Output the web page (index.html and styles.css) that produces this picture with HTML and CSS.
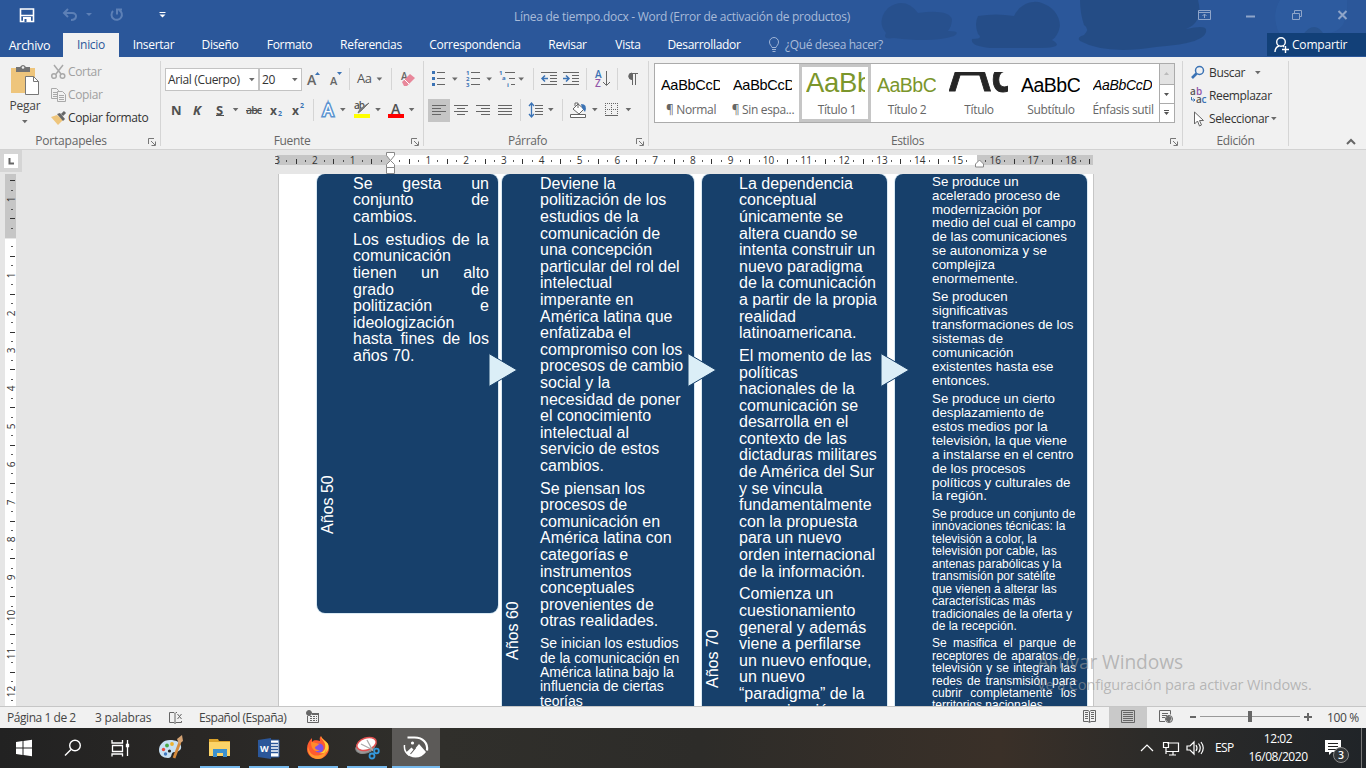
FILE: index.html
```html
<!DOCTYPE html>
<html lang="es">
<head>
<meta charset="utf-8">
<title>Línea de tiempo.docx - Word</title>
<link rel="stylesheet" href="styles.css">
</head>
<body>
<svg class="defs" width="0" height="0" aria-hidden="true">
  <defs>
    <path id="caret" d="M0 0h7L3.500 4z" fill="#6a6a6a"/>
    <g id="launch" fill="none" stroke="#777"><path d="M.5 6V.5H6M3 3l4 4M7.500 3.500v4h-4"/></g>
  </defs>
</svg>

<header class="header">
  <svg class="header-art" width="506" height="57" viewBox="860 0 506 57">
    <g fill="#244b83">
      <path d="M888 8q17-12 30 5q30-4 34 6q0 7-4 12q14 0 6 5q-20 7-60 2q-12 2-8-5q-10-12 2-25z" opacity=".55"/>
      <path d="M978 16q18-3 36 0q8-16 25-14q20 6 21 24q-2 10-8 14q14 8-12 8h-50q-20-2-18-9q12 0 6-5q-4-10 0-18z" opacity=".8"/>
      <path d="M1080 0h118q6 22-12 29q18-4 20 0q4 14-50 18q-50 8-76-6q-4-4 4-6q6-6 0-10q-4-12-4-25z" opacity=".9"/>
      <path d="M1303 35q5-8 11-8t10 8z"/>
    </g>
    <path d="M1280 0h67q2 33-21 33h-47q-8-18 1-33z" fill="#3366ad" opacity=".3"/>
  </svg>
  <div class="titlebar">
    <svg width="180" height="33" viewBox="0 0 180 33" fill="none">
      <path d="M20.500 9h13v12.500h-13zM21 15.500h12" stroke="#fff" stroke-width="1.600"/><path d="M23 17h8v5h-8z" fill="#fff"/><path d="M24.500 19h2v3h-2z" fill="#2b579a"/>
      <g stroke="#5d80b6" stroke-width="2"><path d="M64 13h8c6 0 5 7-1 7M68 9l-4 4 4 4"/><path d="M113 11a5.200 5.200 0 1 0 6-1"/><path d="M117 14.500V9.500h5"/></g>
      <path d="M86 13h6l-3 3z" fill="#5d80b6"/>
      <path d="M159.500 12.500h6" stroke="#fff"/><path d="M159.500 14.500h6l-3 3z" fill="#fff"/>
    </svg>
    <div class="title">Línea de tiempo.docx - Word (Error de activación de productos)</div>
    <svg width="176" height="33" viewBox="1190 0 176 33" fill="none" stroke="#8fa5c9">
      <path d="M1198.500 10.500h12v9h-12zM1198 12.500h13M1204.500 18v-4M1202.500 16l2-2 2 2"/>
      <path d="M1246 16.500h9" stroke-width="2"/>
      <path d="M1292.500 13.500h7v6h-7zM1294.500 13v-2.500h7v6h-2"/>
      <path d="M1338.500 11l8 8m0-8l-8 8" stroke-width="2"/>
    </svg>
  </div>
  <nav class="tabs">
    <span class="tab file">Archivo</span><span class="tab active">Inicio</span><span class="tab t1">Insertar</span><span class="tab t2">Diseño</span><span class="tab t3">Formato</span><span class="tab t4">Referencias</span><span class="tab t5">Correspondencia</span><span class="tab t6">Revisar</span><span class="tab t7">Vista</span><span class="tab t8">Desarrollador</span>
    <svg class="bulb" width="12" height="16" viewBox="0 0 12 16" fill="none" stroke="#9fb4d6"><path d="M4 10.500C3.500 8.500 1.500 8 1.500 5a4 4 0 0 1 9 0c0 3-2 3.500-2.500 5.500zM4 12.500h4M4.500 14.500h3"/></svg>
    <span class="tell">¿Qué desea hacer?</span>
    <span class="share"><svg width="17" height="18" viewBox="0 0 17 18" fill="none" stroke="#fff" stroke-width="1.400"><circle cx="8" cy="6" r="4.300"/><path d="M2 16c0-3 1.500-5 4-6M10 10l1 1M9 13.500h7M12.500 10v7"/></svg><b>Compartir</b></span>
  </nav>
</header>

<section class="ribbon">
  <div class="group g-clip">
    <div class="group-body clip">
      <div class="paste">
        <svg width="30" height="34" viewBox="12 64 30 34"><path d="M13 68h24v25H13z" fill="#eec57c"/><path d="M18 67h4q3-4 6 0h4v5H18z" fill="#737373"/><circle cx="25" cy="67.500" r="1.300" fill="#f1f1f1"/><path d="M27.500 76.500h8l5 5v13h-13z" fill="#fff" stroke="#777"/><path d="M35.500 76.500v5h5" fill="none" stroke="#777"/></svg>
        <span>Pegar</span>
        <svg width="7" height="4"><use href="#caret" transform="scale(.8)"/></svg>
      </div>
      <div class="clip-list">
        <div class="cmd off"><svg width="17" height="16" viewBox="0 0 17 16" fill="none" stroke="#a9a9a9" stroke-width="1.500"><path d="M4 1l7 9M13 1L6 10"/><circle cx="4" cy="12" r="2.300"/><circle cx="12.500" cy="12" r="2.300"/></svg><span>Cortar</span></div>
        <div class="cmd off"><svg width="17" height="16" viewBox="0 0 17 16" fill="#f1f1f1" stroke="#a9a9a9"><path d="M1.500 1.500h5l2 2v8h-7zM3 5.500h4M3 7.500h4M3 9.500h4"/><path d="M7.500 4.500h5l3 3v7h-8zM9 8.500h5M9 10.500h5M9 12.500h5"/></svg><span>Copiar</span></div>
        <div class="cmd wide"><svg width="17" height="16" viewBox="0 0 17 16"><path d="M1 7l6-2 6 5-5 5z" fill="#eec57c"/><path d="M7 4l3-1 5 6-2 2z" fill="#666"/><path d="M12 5l3-3" stroke="#666" stroke-width="3"/></svg><span>Copiar formato</span></div>
      </div>
    </div>
    <div class="caption c1"><span>Portapapeles</span><svg width="9" height="9"><use href="#launch"/></svg></div>
  </div>

  <div class="group g-font">
    <div class="group-body font">
      <div class="row r1">
        <span class="combo face">Arial (Cuerpo)<svg width="7" height="4"><use href="#caret" transform="scale(.8)"/></svg></span><span class="combo size">20<svg width="7" height="4"><use href="#caret" transform="scale(.8)"/></svg></span>
        <svg class="ui" width="119" height="24" viewBox="303 68 119 24">
          <text x="308" y="85" font-size="14" font-weight="600" fill="#666">A</text><path d="M316 75h5l-2.500-3z" fill="#3b73b5"/>
          <text x="331" y="85" font-size="11" font-weight="600" fill="#666">A</text><path d="M338 72h5l-2.500 3z" fill="#3b73b5"/>
          <path d="M350.500 68v22M392.500 68v22" stroke="#d5d5d5"/>
          <text x="358" y="83" font-size="13" fill="#555" textLength="15">Aa</text><use href="#caret" x="472" y="97" transform="scale(.8)"/>
          <text x="402" y="80" font-size="10" font-weight="600" fill="#666">A</text><path d="M403 82l8-8 5 4-8 8h-3z" fill="#e8879a"/><path d="M405 79l5 5" stroke="#fff"/>
        </svg>
      </div>
      <div class="row r2">
        <svg class="ui" width="258" height="26" viewBox="164 97 258 26" fill="#505050">
          <g font-size="13" font-weight="700"><text x="171" y="115" textLength="10">N</text><text x="193" y="115" font-style="italic">K</text><text x="216" y="115">S</text><text x="270" y="115" font-size="12">x</text><text x="292" y="115" font-size="12">x</text></g>
          <path d="M216 115.500h8" stroke="#505050"/>
          <use href="#caret" x="291" y="135" transform="scale(.8)"/>
          <text x="246" y="114" font-size="10.500" font-weight="600" textLength="16">abc</text><path d="M246 110.500h16" stroke="#505050"/>
          <g fill="#3b73b5" font-size="7" font-weight="700"><text x="278" y="116">2</text><text x="300" y="108">2</text></g>
          <path d="M313.500 99v22" stroke="#d5d5d5"/>
          <text x="323" y="116" font-size="16" fill="#fff" stroke="#5b93d0" stroke-width="3.200" paint-order="stroke">A</text>
          <use href="#caret" x="425" y="135" transform="scale(.8)"/>
          <text x="354" y="109" font-size="10" font-weight="600" textLength="11">ab</text><path d="M369 103l-8 8-3 2 2-4z" fill="#777" stroke="#777"/><path d="M354 114h16v4h-16z" fill="#ff0"/>
          <use href="#caret" x="469" y="135" transform="scale(.8)"/>
          <text x="391" y="114" font-size="14" font-weight="600">A</text><path d="M388 114h16v4h-16z" fill="red"/>
          <use href="#caret" x="511" y="135" transform="scale(.8)"/>
        </svg>
      </div>
    </div>
    <div class="caption c2"><span>Fuente</span><svg width="9" height="9"><use href="#launch"/></svg></div>
  </div>

  <div class="group g-para">
    <div class="group-body">
      <svg class="ui" width="224" height="65" viewBox="424 61 224 65" fill="none" stroke="#666">
        <path d="M428 99h22v23h-22z" fill="#c5c5c5" stroke="none"/>
        <path d="M437 72.500h8M437 78.500h8M437 84.500h8M471 72.500h9M471 78.500h9M471 84.500h9M505 72.500h10M509 78.500h6M511 84.500h4"/>
        <g fill="#3b73b5" stroke="none"><path d="M432 71h3v3h-3zM432 77h3v3h-3zM432 83h3v3h-3z"/>
        <g font-size="6" font-weight="700"><text x="466" y="75">1</text><text x="466" y="81">2</text><text x="466" y="87">3</text><text x="499" y="75">1</text><text x="502" y="80">a</text><text x="507" y="87">i</text></g></g>
        <g stroke="none"><use href="#caret" x="565" y="97" transform="scale(.8)"/><use href="#caret" x="608" y="97" transform="scale(.8)"/><use href="#caret" x="648" y="97" transform="scale(.8)"/><use href="#caret" x="685" y="135" transform="scale(.8)"/><use href="#caret" x="740" y="135" transform="scale(.8)"/><use href="#caret" x="782" y="135" transform="scale(.8)"/></g>
        <path d="M533.500 68v22M586.500 68v22M617.500 68v22M520.500 99v22M562.500 99v22" stroke="#d5d5d5"/>
        <path d="M541 72.500h16M550 75.500h7M550 78.500h7M550 81.500h7M541 84.500h16M563 72.500h16M572 75.500h7M572 78.500h7M572 81.500h7M563 84.500h16"/>
        <path d="M548 78.500h-6M545 75.500l-3 3 3 3M563 78.500h6M566 75.500l3 3-3 3" stroke="#3b73b5" stroke-width="1.500"/>
        <g stroke="none" font-size="10" font-weight="600"><text x="595" y="78" fill="#3b73b5">A</text><text x="595" y="87" fill="#9155a8">Z</text></g>
        <path d="M606.500 71v14M603 82l3.500 3.500L610 82"/>
        <path d="M632.500 73v12M635.500 73v12M631 73.500h7"/><path d="M632 73a3 3 0 0 0 0 6.500z" fill="#666"/>
        <path d="M432 105.500h14M432 108.500h9M432 111.500h14M432 114.500h9M454 105.500h14M457 108.500h8M454 111.500h14M457 114.500h8M476 105.500h14M481 108.500h9M476 111.500h14M481 114.500h9M498 105.500h14M498 108.500h14M498 111.500h14M498 114.500h14M535 105.500h8M535 108.500h8M535 111.500h8M535 114.500h8"/>
        <path d="M531.500 103v14M529 106l2.500-3 2.500 3M529 114l2.500 3 2.500-3" stroke="#3b73b5" stroke-width="1.300"/>
        <path d="M573 109l5-5 6 5-5 5zM575 106v-3h3v5" fill="#fff"/><path d="M581 104q7 0 4 8l-3-4z" fill="#3b73b5" stroke="none"/><path d="M570.500 114.500h15v3h-15z" fill="#fff"/>
        <path d="M605.500 103v13M611.500 103v13M617.500 103v13M605 103.500h13M605 109.500h13" stroke-dasharray="1 1"/><path d="M605 115.500h13"/>
      </svg>
    </div>
    <div class="caption c3"><span>Párrafo</span><svg width="9" height="9"><use href="#launch"/></svg></div>
  </div>

  <div class="group g-styles">
    <div class="group-body">
      <div class="gallery">
        <div class="style"><div class="sample s14">AaBbCcD</div><span>¶ Normal</span></div>
        <div class="style"><div class="sample s14">AaBbCcD</div><span>¶ Sin espa...</span></div>
        <div class="style selected"><div class="sample s27">AaBb</div><span>Título 1</span></div>
        <div class="style"><div class="sample s18 green">AaBbC</div><span>Título 2</span></div>
        <div class="style"><div class="sample big"><div class="s84">Aa</div></div><span>Título</span></div>
        <div class="style"><div class="sample s18">AaBbC</div><span>Subtítulo</span></div>
        <div class="style"><div class="sample s14 ital">AaBbCcD</div><span>Énfasis sutil</span></div>
        <svg width="15" height="58" viewBox="0 0 15 58" fill="none" stroke="#ababab"><path d="M.5 0v58M1 20.500h14M1 39.500h14"/><path d="M1 0h14v20H1z" fill="#e3e3e3" stroke="none"/><path d="M5 11h5l-2.500-3z" fill="#bbb" stroke="none"/><path d="M5 29h5l-2.500 3zM5 48h5l-2.500 3z" fill="#555" stroke="none"/><path d="M5 46.500h5" stroke="#555"/></svg>
      </div>
    </div>
    <div class="caption c4"><span>Estilos</span><svg width="9" height="9"><use href="#launch"/></svg></div>
  </div>

  <div class="group g-edit">
    <div class="group-body edit">
      <div class="cmd"><svg width="17" height="16" viewBox="0 0 17 16" fill="none" stroke="#3b73b5"><circle cx="9.500" cy="5.500" r="4" stroke-width="1.500"/><path d="M6.500 8.500L2 13" stroke-width="2.600"/></svg><span class="e1">Buscar</span><svg width="7" height="4"><use href="#caret" transform="scale(.8)"/></svg></div>
      <div class="cmd"><svg class="ui" width="17" height="18" viewBox="0 0 17 18"><g font-size="10" font-weight="600"><text x="0" y="8" fill="#555">a</text><text x="6" y="8" fill="#9155a8">b</text><text x="6" y="16" fill="#555">a</text><text x="11.500" y="16" fill="#3b73b5">c</text></g><path d="M1.500 10v3H5M3.500 11.500L5 13l-1.500 1.500" fill="none" stroke="#3b73b5"/></svg><span class="e2">Reemplazar</span></div>
      <div class="cmd"><svg width="17" height="16" viewBox="0 0 17 16"><path d="M4.500 1v12l3-3 2 5 2-1-2-4.500h4z" fill="#fff" stroke="#666"/></svg><span class="e3">Seleccionar</span><svg width="7" height="4"><use href="#caret" transform="scale(.8)"/></svg></div>
    </div>
    <div class="caption c5"><span>Edición</span></div>
  </div>
  <svg class="collapse" width="10" height="7" viewBox="0 0 10 7"><path d="M1 6l4-4 4 4" fill="none" stroke="#666" stroke-width="2"/></svg>
</section>

<div class="ruler-row">
  <div class="tabstop"><svg width="14" height="14"><path d="M5.500 4v5.500H10" fill="none" stroke="#666" stroke-width="2"/></svg></div>
  <svg class="ui ruler" width="822" height="24" viewBox="275 150 822 24">
    <path d="M277 155h816v10H277z" fill="#c6c6c6"/><path d="M390 155h587v10H390z" fill="#fff"/>
    <g id="hnums" font-size="10" fill="#333" text-anchor="middle"></g>
    <path d="M386.500 152.500h8v3l-4 5-4-5zM386.500 167.500v-3l4-4 4 4v3zM386.500 167.500h8v6h-8zM975.500 167v-3l4-4 4 4v3z" fill="#fff" stroke="#888"/>
  </svg>
</div>

<main class="workspace">
  <svg class="ui vruler" width="17" height="532" viewBox="0 174 17 532">
    <path d="M5 174h11v64H5z" fill="#c6c6c6"/><path d="M5 239h11v467H5z" fill="#fff"/>
    <g id="vnums" font-size="10" fill="#333" text-anchor="middle"></g>
  </svg>
  <div class="page">
    <section class="decade d50">
      <div class="label">Años 50</div>
      <div class="copy">
        <p><span class="j">Se gesta un</span><span class="j">conjunto de</span>cambios.</p>
        <p><span class="j">Los estudios de la</span>comunicación<span class="j">tienen un alto</span><span class="j">grado de</span><span class="j">politización e</span>ideologización<span class="j">hasta fines de los</span>años 70.</p>
      </div>
    </section>
    <section class="decade d60">
      <div class="label">Años 60</div>
      <div class="copy">
        <p>Deviene la<br>politización de los<br>estudios de la<br>comunicación de<br>una concepción<br>particular del rol del<br>intelectual<br>imperante en<br>América latina que<br>enfatizaba el<br>compromiso con los<br>procesos de cambio<br>social y la<br>necesidad de poner<br>el conocimiento<br>intelectual al<br>servicio de estos<br>cambios.</p>
        <p>Se piensan los<br>procesos de<br>comunicación en<br>América latina con<br>categorías e<br>instrumentos<br>conceptuales<br>provenientes de<br>otras realidades.</p>
        <p class="p14">Se inician los estudios<br>de la comunicación en<br>América latina bajo la<br>influencia de ciertas<br>teorías</p>
      </div>
    </section>
    <section class="decade d70">
      <div class="label">Años 70</div>
      <div class="copy">
        <p>La dependencia<br>conceptual<br>únicamente se<br>altera cuando se<br>intenta construir un<br>nuevo paradigma<br>de la comunicación<br>a partir de la propia<br>realidad<br>latinoamericana.</p>
        <p>El momento de las<br>políticas<br>nacionales de la<br>comunicación se<br>desarrolla en el<br>contexto de las<br>dictaduras militares<br>de América del Sur<br>y se vincula<br>fundamentalmente<br>con la propuesta<br>para un nuevo<br>orden internacional<br>de la información.</p>
        <p>Comienza un<br>cuestionamiento<br>general y además<br>viene a perfilarse<br>un nuevo enfoque,<br>un nuevo<br>“paradigma” de la<br>comunicación</p>
      </div>
    </section>
    <section class="decade d80">
      <div class="copy">
        <p>Se produce un<br>acelerado proceso de<br>modernización por<br>medio del cual el campo<br>de las comunicaciones<br>se autonomiza y se<br>complejiza<br>enormemente.</p>
        <p>Se producen<br>significativas<br>transformaciones de los<br>sistemas de<br>comunicación<br>existentes hasta ese<br>entonces.</p>
        <p>Se produce un cierto<br>desplazamiento de<br>estos medios por la<br>televisión, la que viene<br>a instalarse en el centro<br>de los procesos<br>políticos y culturales de<br>la región.</p>
        <p class="p12">Se produce un conjunto de<br>innovaciones técnicas: la<br>televisión a color, la<br>televisión por cable, las<br>antenas parabólicas y la<br>transmisión por satélite<br>que vienen a alterar las<br>características más<br>tradicionales de la oferta y<br>de la recepción.</p>
        <p class="p12"><span class="j">Se masifica el parque de</span><span class="j">receptores de aparatos de</span><span class="j">televisión y se integran las</span><span class="j">redes de transmisión para</span><span class="j">cubrir completamente los</span>territorios nacionales.</p>
      </div>
    </section>
    <svg class="arrow a1" width="30" height="36" viewBox="0 0 30 36"><path d="M1 1.500L29 18 1 34.500z" fill="#dbeef7" stroke="#17406b"/></svg>
    <svg class="arrow a2" width="30" height="36" viewBox="0 0 30 36"><path d="M1 1.500L29 18 1 34.500z" fill="#dbeef7" stroke="#17406b"/></svg>
    <svg class="arrow a3" width="30" height="36" viewBox="0 0 30 36"><path d="M1 1.500L29 18 1 34.500z" fill="#dbeef7" stroke="#17406b"/></svg>
  </div>
  <div class="watermark"><div class="w1">Activar Windows</div><div class="w2">Ve a Configuración para activar Windows.</div></div>
</main>

<footer class="status">
  <span class="st1">Página 1 de 2</span><span class="st2">3 palabras</span>
  <svg width="16" height="14" viewBox="0 0 16 14" fill="none" stroke="#666"><path d="M7 12.500L6 11.500H1.500v-10H6l1 1 1-1h1M7 2.500v10l1-1h5.500V10M9.500 3l4 5M13.500 3l-4 5"/></svg>
  <span class="st3">Español (España)</span>
  <svg class="macro" width="14" height="14" viewBox="0 0 14 14" fill="none" stroke="#666"><path d="M4 6.500h7M4 8.500h7M4 10.500h7" stroke-dasharray="2 1"/><path d="M6 3.500h6.500v9h-11V6"/><path d="M6 3h7v2H6z" fill="#666" stroke="none"/><circle cx="3" cy="3" r="2.500" fill="#666"/></svg>
  <svg class="ui views" width="246" height="21" viewBox="1075 707 246 21" fill="none" stroke="#666">
    <path d="M1109 707h38v21h-38z" fill="#c9c9c9" stroke="none"/>
    <path d="M1089.500 722.500L1088 721.500h-4.500v-11h4.500l1.500 1 1.500-1h4.500v11h-4.500zM1089.500 712v10M1085 712.500h3M1085 714.500h3M1085 716.500h3M1085 718.500h3M1091 712.500h3M1091 714.500h3M1091 716.500h3M1091 718.500h3"/>
    <path d="M1121.500 710.500h13v12h-13zM1123 712.500h10M1123 714.500h10M1123 716.500h10M1123 718.500h10M1123 720.500h10"/>
    <path d="M1165 721.500h-5.500v-11h11v4M1162 713.500h6M1162 715.500h5M1162 717.500h3"/><circle cx="1169" cy="719" r="3.500" fill="#ccc"/><path d="M1168 716l3 2-2 4-3-3z" fill="#666"/>
    <path d="M1190 717h6M1304 717h8M1308 713v8" stroke-width="2"/><path d="M1200 716.500h100" stroke="#999"/><path d="M1248 711h4v11h-4z" fill="#666" stroke="none"/>
  </svg>
  <span class="st4">100 %</span>
</footer>

<footer class="taskbar">
  <div class="task"><svg width="24" height="24" viewBox="0 0 24 24" fill="#fff"><path d="M4 6l6.500-1v6.500H4zM11.500 4.900L20 3.800v7.700h-8.500zM4 12.500h6.500V19L4 18zM11.500 12.500H20v7.700l-8.500-1.100z"/></svg></div>
  <div class="task"><svg width="24" height="24" viewBox="0 0 24 24" fill="none" stroke="#fff" stroke-width="1.400"><circle cx="14" cy="9.500" r="5.300"/><path d="M10 13.500L4 19.500"/></svg></div>
  <div class="task tv"><svg width="24" height="24" viewBox="0 0 24 24" fill="none" stroke="#fff" stroke-width="1.300"><path d="M4 4v3h10.500V4M4.500 9.500h10v6h-10zM4 20.500v-2.500h10.500v2.500M19.500 4v16"/><path d="M18.500 8.500h2v2h-2z" fill="#fff"/></svg></div>
  <div class="task"><svg width="26" height="26" viewBox="0 0 26 26"><path d="M12 5C5 5 1 10 1 15c0 5 4 8 9 8 5 0 2-5 6-6 4 0 8-2 7-6-1-4-5-6-11-6z" fill="#c7e0f3"/><circle cx="5.500" cy="14.500" r="1.700" fill="#e84b3c"/><circle cx="9" cy="10.500" r="1.900" fill="#47a846"/><circle cx="14" cy="9" r="1.900" fill="#eeb12c"/><circle cx="7.500" cy="19" r="1.700" fill="#4078c0"/><circle cx="11.500" cy="16" r="1.600" fill="#222"/><path d="M22 7l-6 16" stroke="#d58a3c" stroke-width="2.800"/><path d="M19 4l5-4 1 6-4 3z" fill="#d4a273"/></svg></div>
  <div class="task open"><svg width="24" height="24" viewBox="0 0 24 24"><path d="M1 3h9l1 2h11v4H1z" fill="#dca32b"/><path d="M1 6h21v14H1z" fill="#fcd468"/><path d="M5 21v-8h14v8h-4v-4H9v4z" fill="#3c91ce"/></svg></div>
  <div class="task open"><svg class="ui" width="24" height="24" viewBox="0 0 24 24"><path d="M12 4h10v17H12z" fill="#fff" stroke="#2b579a"/><path d="M14 7.500h7M14 10.500h7M14 13.500h7M14 16.500h7" stroke="#2b579a" stroke-width="1.300"/><path d="M1 4l13-2v21L1 21z" fill="#2b579a"/><text x="3" y="16" font-size="9" font-weight="700" fill="#fff">W</text></svg></div>
  <div class="task open"><svg width="26" height="26" viewBox="0 0 26 26"><path d="M2 14c0-5 2-8 5-11v4c3-3 6-1 8-1 0-2-1-3 1-5 0 3 8 5 8 12 0 6-5 11-11 11S2 20 2 14z" fill="#ff5b2e"/><path d="M16 1c0 4 3 4 4 8 1 5-1 8-6 9 10 2 10-5 9-9-2-3-6-4-7-8z" fill="#ffd03b"/><path d="M3 11c1 8 6 11 12 9 4-1 6-4 6-7 2 6-3 11-8 11C7 24 2 19 3 11z" fill="#ff9a2f"/><circle cx="14" cy="13" r="4.600" fill="#8052e8"/><path d="M6 7c3 0 5 1 8 2-1 2-4 2-4 4 1 2 3 2 5 2-4 3-9 0-9-8z" fill="#ff8b2c"/></svg></div>
  <div class="task open"><svg width="26" height="26" viewBox="0 0 26 26" fill="none"><ellipse cx="11.500" cy="12" rx="10" ry="6" transform="rotate(-18 11.500 12)" fill="#999" stroke="#888"/><ellipse cx="12.500" cy="9" rx="10" ry="6" transform="rotate(-18 12.500 9)" fill="#fff" stroke="#e05252" stroke-width="1.500"/><path d="M13 5l6 11M7 9l12 6" stroke="#aaa" stroke-width="1.300"/><g stroke="#3498db" stroke-width="1.800"><circle cx="18" cy="21" r="2.500"/><circle cx="22.500" cy="16" r="2.300"/></g></svg></div>
  <div class="task current"><svg width="26" height="26" viewBox="0 0 26 26" fill="none" stroke="#fff" stroke-width="2.200"><path d="M4.500 3.500h7C20 3.500 25 9 24 16.500"/><path d="M1.500 11c-.5 4 1 8 5 10.500" stroke-width="1.500"/><path d="M3 18.500l5.500-5 2.500 2.500 5-6 7 8q-4 5.500-10.500 5.500-6 0-9.500-5z" fill="#fff" stroke="none"/><path d="M7.500 20l5-6" stroke="#5c5a58" stroke-width="1.100"/><circle cx="9.500" cy="9" r="1.600" fill="#fff" stroke="none"/></svg></div>
  <svg class="tray" width="68" height="20" viewBox="1140 738 68 20" fill="none" stroke="#fff" stroke-width="1.200"><path d="M1141 751l6-6 6 6"/><path d="M1167 743h11.500v8.500h-12M1173 752v3M1169 755h7M1163.500 742.500h5v5h-5zM1166 748v6"/><path d="M1187 746h3l4-4v12l-4-4h-3zM1196 745q2 3 0 6M1198.500 743.500q3.500 4.500 0 9M1201 742q4.500 6 0 12"/></svg>
  <span class="lang">ESP</span>
  <div class="clock"><span>12:02</span><span>16/08/2020</span></div>
  <svg class="ui notif" width="42" height="40" viewBox="1324 728 42 40"><path d="M1325 740h16v12h-9l-3 3v-3h-4z" fill="#fff"/><path d="M1328 743.500h10M1328 746.500h10M1328 749.500h8" stroke="#222"/><circle cx="1341" cy="755" r="7.500" fill="#333638" stroke="#8c8c8c"/><text x="1338" y="759" font-size="10.500" font-weight="600" fill="#fff">3</text><path d="M1361.500 728v40" stroke="#777"/></svg>
</footer>
<script src="ruler.js"></script>
</body>
</html>
```
FILE: ruler.js
```js
// Draws centimetre numbers and quarter marks on both rulers.
const CM = 37.8;
const NS = "http://www.w3.org/2000/svg";
function add(parent, tag, attrs, text) {
  const el = document.createElementNS(NS, tag);
  for (const k in attrs) el.setAttribute(k, attrs[k]);
  if (text) el.textContent = text;
  parent.appendChild(el);
}
const h = document.getElementById("hnums");
for (let q = -12; q <= 74; q++) {
  const x = Math.round(390 + q * CM / 4), k = Math.abs(q) % 4;
  if (q === 0 || q === 62) continue;
  if (k === 0) add(h, "text", { x: 390.5 + q * CM / 4, y: 164 }, String(Math.abs(q / 4)));
  else if (k === 2) add(h, "rect", { x, y: 159, width: 1, height: 5 });
  else add(h, "rect", { x, y: 160, width: 1, height: 2, opacity: 0.8 });
}
const v = document.getElementById("vnums");
for (let q = -6; q <= 49; q++) {
  const y = Math.round(237 + q * CM / 4), k = Math.abs(q) % 4;
  if (q === 0) continue;
  if (k === 0) add(v, "text", { x: 15, y: y + 0.5, transform: `rotate(-90 15 ${y + 0.5})` }, String(Math.abs(q / 4)));
  else if (k === 2) add(v, "rect", { x: 10, y, width: 5, height: 1 });
  else add(v, "rect", { x: 11, y, width: 2, height: 1, opacity: 0.8 });
}
```
FILE: styles.css
```css
* { box-sizing: border-box; }
body { margin: 0; width: 1366px; height: 768px; overflow: hidden; font: 12px/16px "Open Sans", "Noto Sans", sans-serif; letter-spacing: -0.35px; color: #444; background: #e6e6e6; }
svg { display: block; flex: none; }
.defs { position: absolute; }
.ui { font-family: "Open Sans", sans-serif; letter-spacing: 0; }

.header { position: relative; height: 57px; background: #2b579a; color: #fff; }
.header-art { position: absolute; right: 0; top: 0; }
.titlebar { position: relative; display: flex; height: 33px; }
.title { flex: 1; text-align: center; padding: 9px 6px 0 0; color: #a9bbd9; letter-spacing: -0.27px; }
.tabs { position: relative; display: flex; height: 24px; line-height: 23px; white-space: nowrap; letter-spacing: -0.3px; }
.tab { text-align: center; flex: none; }
.file { width: 63px; padding: 1px 4px 0 0; font-size: 12.5px; }
.active { width: 56px; background: #f1f1f1; color: #2b579a; }
.t1 { width: 69px; } .t2 { width: 64px; } .t3 { width: 75px; } .t4 { width: 88px; } .t5 { width: 120px; }
.t6 { width: 65px; } .t7 { width: 56px; } .t8 { width: 96px; }
.bulb { margin: 4px 5px 0 16px; }
.tell { color: #a9bbd9; width: 200px; letter-spacing: -0.4px; }
.share { display: flex; align-items: center; gap: 2px; margin-left: auto; width: 99px; height: 23px; padding-left: 6px; background: #124078; letter-spacing: -0.2px; }
.share b { font-weight: 400; }

.ribbon { display: flex; height: 93px; padding-top: 4px; background: #f1f1f1; border-bottom: 1px solid #d2d2d2; }
.group { display: flex; flex-direction: column; height: 85px; border-right: 1px solid #d5d5d5; flex: none; }
.g-clip { width: 161px; } .g-font { width: 263px; } .g-para { width: 225px; } .g-styles { width: 534px; } .g-edit { width: 106px; }
.group-body { height: 72px; flex: none; }
.caption { position: relative; display: flex; justify-content: center; align-items: center; height: 16px; flex: none; color: #666; }
.caption svg { position: absolute; right: 3px; top: 5px; }
.c1 { padding-right: 18px; letter-spacing: -0.2px; } .c3 { padding-right: 17px; } .c4 { padding-right: 16px; }
.clip { display: flex; }
.paste { display: flex; flex-direction: column; align-items: center; width: 50px; padding-top: 3px; letter-spacing: -0.2px; }
.paste svg:last-child { margin-top: 6px; }
.clip-list { display: flex; flex-direction: column; margin-top: -1px; }
.cmd { display: flex; align-items: center; height: 23px; gap: 1px; color: #333; white-space: nowrap; }
.off { color: #a0a0a0; }
.font { padding-left: 3px; }
.row { display: flex; }
.r1 { padding: 7px 0 0 1px; height: 36px; }
.combo { display: flex; align-items: center; justify-content: space-between; height: 23px; border: 1px solid #c3c3c3; background: #fff; color: #333; padding: 0 2px; flex: none; }
.face { width: 94px; } .size { width: 43px; }

.gallery { display: flex; margin: 2px 0 0 5px; width: 521px; height: 60px; border: 1px solid #ababab; background: #fff; }
.style { width: 72px; height: 58px; padding: 8px 6px 0; text-align: center; flex: none; white-space: nowrap; color: #666; }
.style span { display: block; margin: 0 -5px; }
.sample { width: 59px; height: 30px; overflow: hidden; text-align: left; font: 14.5px/26px "Liberation Sans", sans-serif; letter-spacing: -0.3px; color: #000; }
.s18 { font-size: 19.5px; letter-spacing: -0.5px; }
.s27 { font-size: 27.5px; line-height: 22px; color: #7b962c; margin-left: -3px; letter-spacing: -0.3px; }
.big { height: 22px; margin-bottom: 8px; }
.s84 { width: 120px; height: 22px; font-size: 80px; line-height: 22px; margin-top: -19px; color: #262626; transform: scaleX(.78); transform-origin: left; letter-spacing: 0; -webkit-text-stroke: 1px #262626; }
.green { color: #7b962c; }
.ital { font-size: 14px; font-style: italic; letter-spacing: -0.3px; }
.selected { border: 3px solid #c6c6c6; padding-top: 5px; padding-left: 7px; padding-right: 3px; }
.edit { padding-left: 7px; }
.edit .cmd { gap: 2px; }
.cmd > span { margin-right: 8px; }
.cmd > .e3 { margin-right: 0; }
.collapse { margin: 77px 0 0 57px; }

.ruler-row { display: flex; height: 24px; }
.tabstop { width: 22px; height: 22px; padding: 4px; background: #d5d5d5; }
.tabstop svg { background: #fff; }
.ruler { margin-left: 253px; }

.workspace { position: relative; display: flex; height: 532px; overflow: hidden; }
.page { position: relative; display: flex; align-items: flex-start; margin-left: 261px; width: 816px; height: 532px; padding-left: 38px; background: #fff; border: solid #c6c6c6; border-width: 0 1px; overflow: hidden; font-family: "Liberation Sans", Arial, sans-serif; letter-spacing: 0; }
.decade { display: flex; flex: none; height: 560px; background: #17406b; color: #fff; border-radius: 8px; box-shadow: 0 0 0 1px #d9e9f3; white-space: nowrap; }
.d50 { width: 181px; height: 439px; }
.d60 { width: 192px; margin-left: 4px; }
.d70 { width: 185px; margin-left: 8px; }
.d80 { width: 192px; margin-left: 8px; padding-left: 37px; }
.label { writing-mode: vertical-rl; transform: rotate(180deg); width: 18px; height: 60px; font-size: 16px; line-height: 18px; flex: none; }
.d50 .label { margin: 300px 16px 0 2px; }
.d60 .label { margin: 426px 18px 0 2px; }
.d70 .label { margin: 454px 17px 0 2px; }
.copy { width: 136px; padding-top: 1.8px; font-size: 16px; line-height: 16.6px; }
.copy p { margin: 0 0 6.2px; }
.j { display: block; text-align-last: justify; }
.copy .p14 { font-size: 14px; line-height: 14.4px; }
.d80 .copy { width: 144px; padding-top: 0.8px; font-size: 13.33px; line-height: 13.87px; }
.d80 .copy p { margin-bottom: 4.7px; }
.d80 .copy .p12 { font-size: 12px; line-height: 12.45px; }
.arrow { position: absolute; top: 178px; }
.a1 { left: 209px; } .a2 { left: 408px; } .a3 { left: 601px; }
.watermark { position: absolute; left: 1037px; top: 474px; color: rgba(150, 150, 150, .62); white-space: nowrap; }
.w1 { font-size: 19.2px; line-height: 28px; letter-spacing: -0.12px; }
.w2 { font-size: 14.5px; line-height: 18px; letter-spacing: -0.12px; }

.status { display: flex; align-items: center; height: 22px; border-top: 1px solid #c6c6c6; background: #f1f1f1; padding-left: 7px; white-space: nowrap; }
.st1 { width: 88px; letter-spacing: -0.45px; }
.st2 { width: 73px; letter-spacing: -0.2px; }
.st3 { width: 92px; margin: 0 16px 0 15px; letter-spacing: -0.45px; }
.views { margin-left: auto; }
.st4 { width: 45px; padding-left: 6px; }
.macro { margin-left: -1px; margin-top: -2px; }

.taskbar { display: flex; height: 40px; color: #fff; background: linear-gradient(90deg, #222 0, #292725 200px, #302f2b 440px, #2d2c29 700px, #3a3028 1000px, #2c2b29 1150px, #202428 1366px); }
.task { display: flex; align-items: center; justify-content: center; width: 49px; height: 40px; flex: none; padding-right: 1px; }
.tv { padding-right: 5px; }
.open { background: linear-gradient(#76b9ed, #76b9ed) 4px bottom / 40px 2px no-repeat; }
.current { background: #5c5a58; border-bottom: 2px solid #76b9ed; width: 48px; }
.tray { margin: 10px 7px 0 auto; }
.lang { width: 30px; padding-top: 12px; letter-spacing: -0.6px; }
.clock { display: flex; flex-direction: column; align-items: center; width: 66px; padding-top: 2px; margin: 0 13px 0 0; line-height: 18px; letter-spacing: -0.45px; }
```
